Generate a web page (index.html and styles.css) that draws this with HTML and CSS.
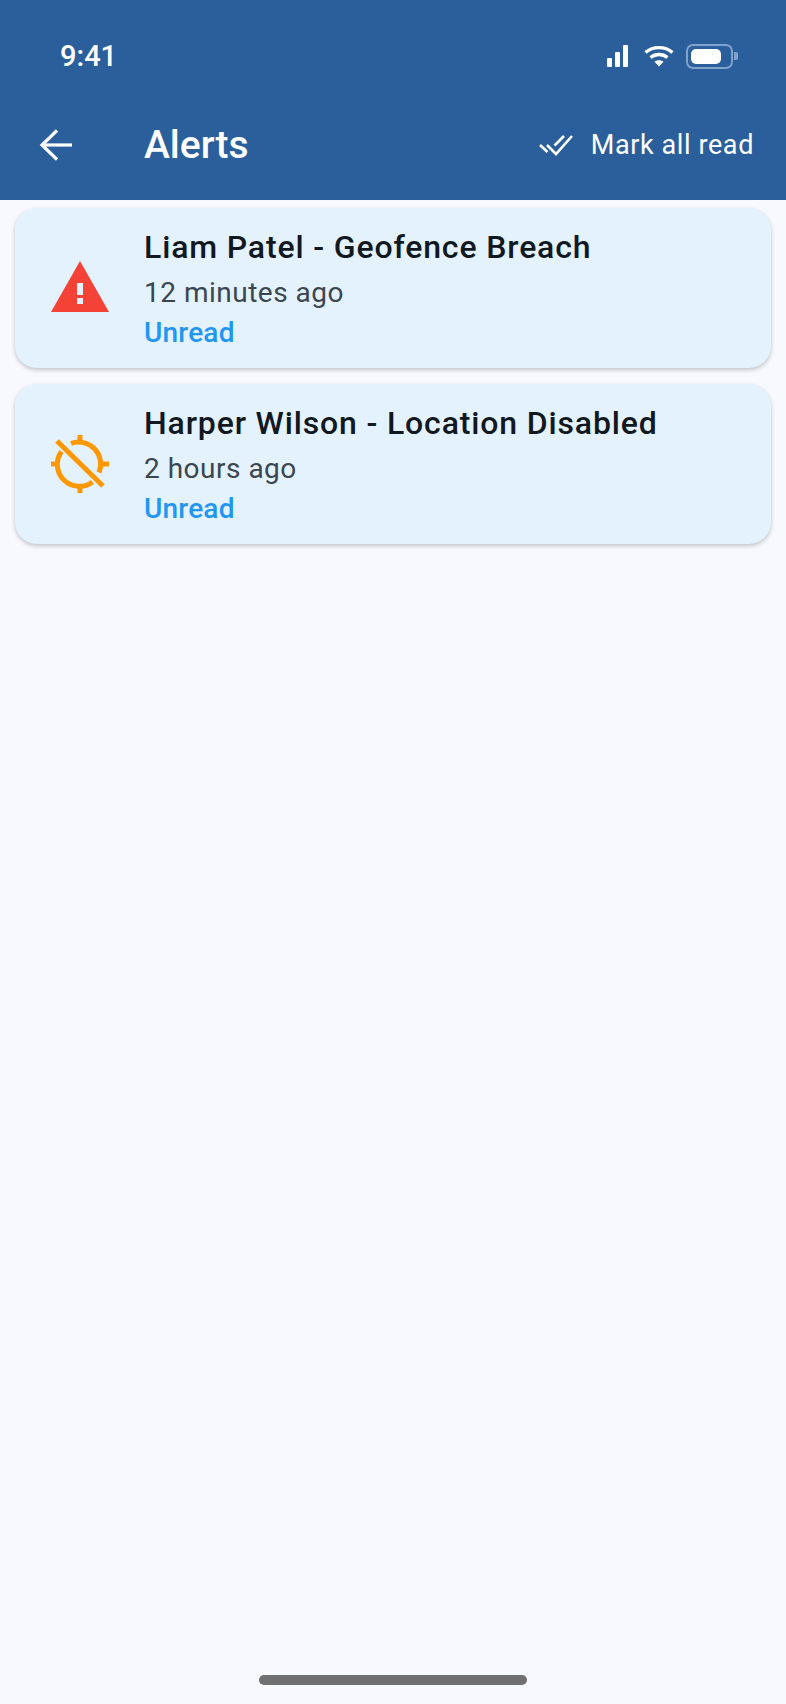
FILE: index.html
```html
<!DOCTYPE html>
<html lang="en">
<head>
  <meta charset="UTF-8">
  <meta name="viewport" content="width=device-width, initial-scale=1.0">
  <title>Alerts</title>
  <link rel="stylesheet" href="styles.css">
</head>
<body>
  <div id="app">
    <header id="top-bar">
      <div id="status-bar">
        <span id="clock">9:41</span>
        <div id="status-icons">
          <svg class="signal" width="21" height="22" viewBox="0 0 21 22" fill="#fff">
            <rect x="0" y="13" width="5" height="9" rx="1"/>
            <rect x="8" y="7" width="5" height="15" rx="1"/>
            <rect x="16" y="0" width="5" height="22" rx="1"/>
          </svg>
          <svg class="wifi" width="30" height="22" viewBox="0 0 30 22" fill="none" stroke="#fff" stroke-width="3.4">
            <path d="M1.500 7.500C9 1 21 1 28.500 7.500"/>
            <path d="M6.500 12.500C11.500 8.500 18.500 8.500 23.500 12.500"/>
            <path d="M15 21.500l-4.500-4.800c2.600-2 6.400-2 9 0z" fill="#fff" stroke="none"/>
          </svg>
          <div class="battery">
            <div class="battery-body"><div class="battery-level"></div></div>
            <div class="battery-tip"></div>
          </div>
        </div>
      </div>
      <div id="app-bar">
        <svg class="back" width="36" height="36" viewBox="0 0 36 36" fill="none" stroke="#fff" stroke-width="3.200">
          <path d="M34 18H4"/>
          <path d="M19 3.500L4 18l15 14.500"/>
        </svg>
        <h1>Alerts</h1>
        <a id="mark-read" href="#">
          <svg width="34" height="22" viewBox="0 0 34 22" fill="none" stroke="#fff" stroke-width="2.600">
            <path d="M1 11l7.500 7"/>
            <path d="M8 11l9 9L33 2"/>
            <path d="M15.500 11.500L25 2"/>
          </svg>
          <span>Mark all read</span>
        </a>
      </div>
    </header>

    <main id="alerts">
      <div class="alert">
        <div class="alert-icon warning">
          <svg width="58" height="51" viewBox="0 0 58 51">
            <path d="M29 0L58 51H0z" fill="#f44336"/>
            <rect x="26" y="22" width="6" height="12" fill="#e3f2fd"/>
            <rect x="26" y="37" width="6" height="6" fill="#e3f2fd"/>
          </svg>
        </div>
        <div class="alert-text">
          <div class="alert-title">Liam Patel - Geofence Breach</div>
          <div class="alert-time">12 minutes ago</div>
          <div class="alert-status">Unread</div>
        </div>
      </div>
      <div class="alert">
        <div class="alert-icon">
          <svg width="60" height="60" viewBox="0 0 60 60" fill="none" stroke="#ff9800" stroke-width="5">
            <path d="M21 9.500A22 22 0 0 1 49 38.500"/>
            <path d="M11.500 17.500A22 22 0 0 0 42.500 48"/>
            <path d="M30 1v8M30 51v8M1 30h8M51 30h8"/>
            <path d="M7 7l46 45"/>
          </svg>
        </div>
        <div class="alert-text">
          <div class="alert-title">Harper Wilson - Location Disabled</div>
          <div class="alert-time">2 hours ago</div>
          <div class="alert-status">Unread</div>
        </div>
      </div>
    </main>

    <div id="home-indicator"></div>
  </div>
</body>
</html>
```

FILE: styles.css
```css
body {
  margin: 0;
  font-family: Roboto, Arial, sans-serif;
  background-color: #f7f9fe;
}

#app {
  height: 1704px;
  display: flex;
  flex-direction: column;
  overflow: hidden;
}

#top-bar {
  height: 200px;
  background-color: #2b5f9c;
  color: #fff;
  display: flex;
  flex-direction: column;
}

#status-bar {
  display: flex;
  justify-content: space-between;
  align-items: center;
  padding: 36px 48px 0 60px;
  height: 40px;
}

#clock {
  font-size: 29px;
  font-weight: 500;
}

#status-icons {
  display: flex;
  align-items: center;
  gap: 12px;
}

.signal {
  margin-right: 4px;
}

.battery {
  display: flex;
  align-items: center;
  gap: 1px;
}

.battery-body {
  box-sizing: border-box;
  width: 47px;
  height: 25px;
  padding: 3px 10px 3px 3px;
  border: 2px solid #7fa3cc;
  border-radius: 7px;
}

.battery-level {
  height: 100%;
  background-color: #fff;
  border-radius: 5px;
}

.battery-tip {
  width: 4px;
  height: 8px;
  background-color: #7fa3cc;
  border-radius: 0 2px 2px 0;
}

#app-bar {
  flex-grow: 1;
  display: flex;
  align-items: center;
  padding: 13px 32px 0 38px;
}

.back {
  flex-shrink: 0;
}

#app-bar h1 {
  margin: 0 0 0 70px;
  flex-grow: 1;
  font-size: 39px;
  font-weight: 500;
}

#mark-read {
  display: flex;
  align-items: center;
  gap: 18px;
  color: #fff;
  text-decoration: none;
  font-size: 27px;
  letter-spacing: 0.6px;
}

#alerts {
  padding: 8px 15px;
  display: flex;
  flex-direction: column;
  gap: 16px;
}

.alert {
  height: 160px;
  display: flex;
  align-items: center;
  background-color: #e3f2fd;
  border-radius: 22px;
  box-shadow: 0 2px 4px rgba(0, 0, 0, 0.22);
}

.alert-icon {
  width: 129px;
  padding-left: 1px;
  box-sizing: border-box;
  display: flex;
  justify-content: center;
  flex-shrink: 0;
}

.alert-icon.warning {
  margin-bottom: 3px;
}

.alert-title {
  font-size: 32px;
  font-weight: 500;
  letter-spacing: 0.85px;
  color: #12181f;
  margin-bottom: 10px;
}

.alert-time {
  font-size: 28px;
  letter-spacing: 0.5px;
  color: #3c4650;
  margin-bottom: 7px;
}

.alert-status {
  font-size: 28px;
  font-weight: 500;
  letter-spacing: 0.2px;
  color: #2196f3;
}

#home-indicator {
  width: 268px;
  height: 10px;
  margin: auto auto 19px;
  background-color: #707070;
  border-radius: 5px;
}
```
